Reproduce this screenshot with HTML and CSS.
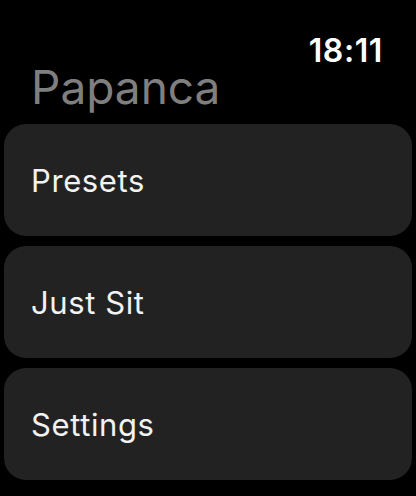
FILE: index.html
```html
<!DOCTYPE html>
<html lang="en">
<head>
  <meta charset="UTF-8">
  <title>Papanca</title>
  <link rel="stylesheet" href="styles.css">
</head>
<body>
  <div class="screen">
    <div class="status">
      <span class="time">18:11</span>
    </div>
    <h1 class="title">Papanca</h1>

    <!-- Menu -->
    <div class="menu">
      <div class="item">Presets</div>
      <div class="item">Just Sit</div>
      <div class="item">Settings</div>
    </div>
  </div>
</body>
</html>
```

FILE: styles.css
```css
body {
  margin: 0;
  background: #000;
  font-family: Inter, "Noto Sans", sans-serif;
  color: #fff;
}

.screen {
  width: 416px;
  height: 496px;
  overflow: hidden;
}

.status {
  display: flex;
  justify-content: flex-end;
  padding: 33px 33px 0 0;
  height: 36px;
}

.time {
  font-size: 32px;
  font-weight: 600;
  line-height: 36px;
  letter-spacing: 0.6px;
}

.title {
  margin: 0;
  padding-left: 31px;
  font-size: 46px;
  font-weight: 400;
  line-height: 36px;
  color: #7f7f7f;
  height: 55px;
}

.menu {
  display: flex;
  flex-direction: column;
  gap: 10px;
  padding: 0 4px;
}

.item {
  height: 112px;
  background: #222222;
  border-radius: 22px;
  display: flex;
  align-items: center;
  padding-left: 27px;
  font-size: 31px;
  letter-spacing: 0.6px;
  color: #f2f2f2;
}
```
